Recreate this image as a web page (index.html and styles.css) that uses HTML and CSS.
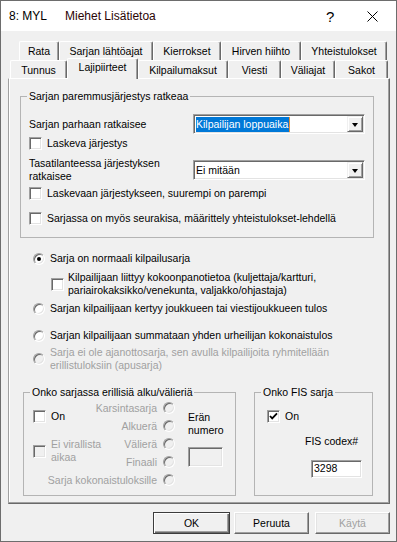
FILE: index.html
```html
<!DOCTYPE html>
<html lang="fi">
<head>
<meta charset="UTF-8">
<meta name="viewport" content="width=device-width, initial-scale=1.0">
<title>8: MYL Miehet Lisätietoa</title>
<link rel="stylesheet" href="styles.css">
</head>
<body>
    <div class="window">
        <div class="titlebar">
            <span class="title-id">8: MYL</span>
            <span class="title-name">Miehet Lisätietoa</span>
            <span class="title-help">?</span>
            <svg class="title-close" width="11" height="11" viewBox="0 0 11 11">
                <path d="M0.5 0.5 L10.5 10.5 M10.5 0.5 L0.5 10.5" stroke="#000" stroke-width="1"/>
            </svg>
        </div>

        <div class="client">
            <div class="tabs">
                <div class="tabrow tabrow-back">
                    <div class="tab">Rata</div>
                    <div class="tab">Sarjan lähtöajat</div>
                    <div class="tab">Kierrokset</div>
                    <div class="tab">Hirven hiihto</div>
                    <div class="tab">Yhteistulokset</div>
                </div>
                <div class="tabrow tabrow-front">
                    <div class="tab">Tunnus</div>
                    <div class="tab tab-active">Lajipiirteet</div>
                    <div class="tab">Kilpailumaksut</div>
                    <div class="tab">Viesti</div>
                    <div class="tab">Väliajat</div>
                    <div class="tab">Sakot</div>
                </div>
            </div>

            <div class="panel">
                <fieldset class="group group-order">
                    <legend>Sarjan paremmusjärjestys ratkeaa</legend>
                    <div class="order-body">
                        <div class="field-row">
                            <span>Sarjan parhaan ratkaisee</span>
                            <div class="combo">
                                <span class="combo-text"><span class="selected-text">Kilpailijan loppuaika</span></span>
                                <span class="combo-btn"><i class="arrow"></i></span>
                            </div>
                        </div>
                        <div class="check-row row-gap-1">
                            <span class="checkbox"></span>
                            <span>Laskeva järjestys</span>
                        </div>
                        <div class="field-row row-gap-5">
                            <span>Tasatilanteessa järjestyksen<br>ratkaisee</span>
                            <div class="combo">
                                <span class="combo-text">Ei mitään</span>
                                <span class="combo-btn"><i class="arrow"></i></span>
                            </div>
                        </div>
                        <div class="check-row row-gap-8">
                            <span class="checkbox"></span>
                            <span>Laskevaan järjestykseen, suurempi on parempi</span>
                        </div>
                        <div class="check-row row-gap-8">
                            <span class="checkbox"></span>
                            <span>Sarjassa on myös seurakisa, määrittely yhteistulokset-lehdellä</span>
                        </div>
                    </div>
                </fieldset>

                <div class="kinds">
                    <div class="option">
                        <span class="radio radio-on"></span>
                        <span>Sarja on normaali kilpailusarja</span>
                    </div>
                    <div class="option sub-option">
                        <span class="checkbox"></span>
                        <span>Kilpailijaan liittyy kokoonpanotietoa (kuljettaja/kartturi,<br>pariairokaksikko/venekunta, valjakko/ohjastaja)</span>
                    </div>
                    <div class="option option-r2">
                        <span class="radio"></span>
                        <span>Sarjan kilpailijaan kertyy joukkueen tai viestijoukkueen tulos</span>
                    </div>
                    <div class="option option-r3">
                        <span class="radio"></span>
                        <span>Sarjan kilpailijaan summataan yhden urheilijan kokonaistulos</span>
                    </div>
                    <div class="option option-r4 disabled">
                        <span class="radio radio-off"></span>
                        <span>Sarja ei ole ajanottosarja, sen avulla kilpailijoita ryhmitellään<br>erillistuloksiin (apusarja)</span>
                    </div>
                </div>

                <div class="bottom-groups">
                    <fieldset class="group">
                        <legend>Onko sarjassa erillisiä alku/välieriä</legend>
                        <div class="heat-body">
                            <div class="heat-left">
                                <div class="check-row heat-on">
                                    <span class="checkbox"></span>
                                    <span>On</span>
                                </div>
                                <div class="check-row heat-official disabled">
                                    <span class="checkbox checkbox-off"></span>
                                    <span>Ei virallista<br>aikaa</span>
                                </div>
                            </div>
                            <div class="heat-kinds disabled">
                                <div class="heat-kind"><span>Karsintasarja</span><span class="radio radio-off"></span></div>
                                <div class="heat-kind"><span>Alkuerä</span><span class="radio radio-off"></span></div>
                                <div class="heat-kind"><span>Välierä</span><span class="radio radio-off"></span></div>
                                <div class="heat-kind"><span>Finaali</span><span class="radio radio-off"></span></div>
                                <div class="heat-kind"><span>Sarja kokonaistuloksille</span><span class="radio radio-off"></span></div>
                            </div>
                            <div class="heat-number">
                                <span>Erän<br>numero</span>
                                <span class="edit edit-off heat-edit"></span>
                            </div>
                        </div>
                    </fieldset>

                    <fieldset class="group">
                        <legend>Onko FIS sarja</legend>
                        <div class="fis-body">
                            <div class="check-row">
                                <span class="checkbox">
                                    <svg width="11" height="11" viewBox="0 0 11 11">
                                        <path d="M2 5 L4.2 7.4 L9 2.4" fill="none" stroke="#000" stroke-width="1.8"/>
                                    </svg>
                                </span>
                                <span>On</span>
                            </div>
                            <div class="fis-label">FIS codex#</div>
                            <div class="edit fis-edit">3298</div>
                        </div>
                    </fieldset>
                </div>
            </div>

            <div class="buttons">
                <button class="btn btn-default">OK</button>
                <button class="btn">Peruuta</button>
                <button class="btn btn-disabled">Käytä</button>
            </div>
        </div>
    </div>
</body>
</html>
```

FILE: styles.css
```css
* {
    box-sizing: border-box;
}
body {
    margin: 0;
    background: #fff;
    font-family: "Liberation Sans", Arial, sans-serif;
    font-size: 10.5px;
    line-height: 13px;
    color: #000;
}
.window {
    width: 397px;
    height: 542px;
    border: 1px solid #6d6d6d;
    display: flex;
    flex-direction: column;
}

/* title bar */
.titlebar {
    height: 30px;
    flex: none;
    background: #fff;
    display: flex;
    align-items: center;
    padding-left: 8px;
    font-size: 12px;
}
.title-name {
    margin-left: 18px;
    color: #2b0505;
}
.title-help {
    margin-left: auto;
    width: 9px;
    font-size: 15px;
    margin-top: 1px;
}
.title-close {
    margin-left: 32px;
    margin-right: 18px;
}

.client {
    flex: 1;
    background: #f0f0f0;
    padding-top: 10px;
}

/* tabs */
.tabrow {
    display: grid;
}
.tabrow-back {
    margin-left: 18px;
    height: 19px;
    grid-template-columns: 40px 94px 68px 80px 86px;
}
.tabrow-front {
    margin-left: 9px;
    height: 18px;
    grid-template-columns: 57px 71px 90px 53px 54px 53px;
}
.tab {
    display: flex;
    align-items: center;
    justify-content: center;
    background: #f0f0f0;
    border-top: 1px solid #fff;
    border-left: 1px solid #fff;
    border-right: 1px solid #696969;
    box-shadow: inset -1px 0 0 #a0a0a0;
    border-radius: 2px 2px 0 0;
    padding-top: 1px;
}
.tab-active {
    position: relative;
    z-index: 1;
    margin: -2px 0 -1px 0;
    padding-bottom: 4px;
}

.panel {
    margin-left: 7px;
    width: 382px;
    height: 426px;
    border: 1px solid;
    border-color: #fff #696969 #696969 #a0a0a0;
    box-shadow: inset -1px -1px 0 #a0a0a0, inset 1px 0 0 #fff;
    padding-top: 11px;
}

/* group boxes */
.group {
    margin: 0;
    padding: 0;
    min-width: 0;
    border: 1px solid #b4b4b4;
}
.group legend {
    margin-left: 6px;
    padding: 0 2px;
    line-height: 13px;
}
.group-order {
    margin-left: 11px;
    width: 354px;
}
.order-body {
    padding: 11px 0 10px 8px;
}
.field-row {
    display: grid;
    grid-template-columns: 164px 172px;
    align-items: center;
    height: 20px;
}
.row-gap-1 { margin-top: 1px; }
.row-gap-5 { margin-top: 5px; }
.row-gap-8 { margin-top: 8px; }

.check-row {
    display: flex;
    align-items: center;
    gap: 5px;
    min-height: 17px;
}

/* classic controls */
.checkbox {
    flex: none;
    width: 13px;
    height: 13px;
    background: #fff;
    border: 1px solid;
    border-color: #a0a0a0 #fff #fff #a0a0a0;
    box-shadow: inset 1px 1px 0 #696969, inset -1px -1px 0 #e3e3e3;
    display: flex;
    align-items: center;
    justify-content: center;
}
.checkbox-off {
    background: #f0f0f0;
}
.radio {
    flex: none;
    width: 12px;
    height: 12px;
    border-radius: 50%;
    background: #fff;
    border: 1px solid;
    border-color: #a0a0a0 #fff #fff #a0a0a0;
    box-shadow: inset 1px 1px 0 #696969, inset -1px -1px 0 #e3e3e3;
    display: flex;
    align-items: center;
    justify-content: center;
}
.radio-on::after {
    content: "";
    width: 4px;
    height: 4px;
    border-radius: 50%;
    background: #000;
}
.radio-off {
    background: #f0f0f0;
}
.combo {
    width: 172px;
    height: 20px;
    background: #fff;
    border: 1px solid;
    border-color: #a0a0a0 #fff #fff #a0a0a0;
    box-shadow: inset 1px 1px 0 #696969, inset -1px -1px 0 #e3e3e3;
    padding: 1px;
    display: flex;
    align-items: center;
}
.combo-text {
    flex: 1;
    padding-left: 1px;
}
.selected-text {
    background: #0078d7;
    color: #fff;
    padding: 1px 1px 2px 0;
    border-right: 1px solid #e8923a;
}
.combo-btn {
    width: 16px;
    height: 16px;
    background: #f0f0f0;
    border: 1px solid;
    border-color: #f0f0f0 #696969 #696969 #f0f0f0;
    box-shadow: inset 1px 1px 0 #fff, inset -1px -1px 0 #a0a0a0;
    display: flex;
    align-items: center;
    justify-content: center;
}
.arrow {
    width: 0;
    height: 0;
    border-left: 3.5px solid transparent;
    border-right: 3.5px solid transparent;
    border-top: 4px solid #000;
    margin-top: 1px;
}
.edit {
    background: #fff;
    border: 1px solid;
    border-color: #a0a0a0 #fff #fff #a0a0a0;
    box-shadow: inset 1px 1px 0 #696969, inset -1px -1px 0 #e3e3e3;
    padding: 2px 0 0 2px;
}
.edit-off {
    background: #f0f0f0;
}
.disabled {
    color: #a0a0a0;
}

/* kind radios */
.kinds {
    margin-left: 24px;
}
.option {
    display: flex;
    align-items: center;
    gap: 5px;
    min-height: 17px;
    margin-top: 12px;
}
.sub-option {
    margin-left: 18px;
    margin-top: 4px;
    gap: 4px;
}
.option-r2 { margin-top: 3px; }
.option-r3 { margin-top: 10px; }
.option-r4 { margin-top: 2px; }

/* bottom groups */
.bottom-groups {
    display: grid;
    grid-template-columns: 213px 119px;
    column-gap: 18px;
    height: 110px;
    margin: 14px 0 0 14px;
}
.heat-body {
    display: grid;
    grid-template-columns: 142px 1fr;
    column-gap: 13px;
    padding-left: 9px;
}
.heat-left {
    grid-area: 1 / 1;
}
.heat-on {
    margin-top: 9px;
}
.heat-official {
    margin-top: 13px;
}
.heat-kinds {
    grid-area: 1 / 1;
}
.heat-kind {
    height: 18px;
    display: flex;
    align-items: center;
    justify-content: flex-end;
    gap: 6px;
}
.heat-number {
    grid-area: 1 / 2;
    padding-top: 12px;
}
.heat-edit {
    display: block;
    width: 35px;
    height: 20px;
    margin-top: 10px;
}
.fis-body {
    display: flex;
    flex-direction: column;
    align-items: flex-start;
    padding: 9px 0 0 12px;
}
.fis-label {
    margin: 10px 0 0 38px;
}
.fis-edit {
    width: 51px;
    height: 18px;
    margin: 12px 0 0 44px;
    padding-top: 1px;
}

/* dialog buttons */
.buttons {
    display: flex;
    justify-content: flex-end;
    margin-top: 8px;
    padding-right: 6px;
}
.btn {
    width: 75px;
    height: 22px;
    margin-left: 6px;
    font: inherit;
    color: #000;
    background: #f0f0f0;
    border: 1px solid;
    border-color: #fff #696969 #696969 #fff;
    box-shadow: inset -1px -1px 0 #a0a0a0, inset 1px 1px 0 #e3e3e3;
    padding: 0;
}
.btn-default {
    width: 77px;
    margin-right: -2px;
    border: 1px solid #3c3c3c;
    box-shadow: inset 1px 1px 0 #fff, inset -1px -1px 0 #696969, inset -2px -2px 0 #a0a0a0;
}
.btn-disabled {
    color: #a0a0a0;
}
```
